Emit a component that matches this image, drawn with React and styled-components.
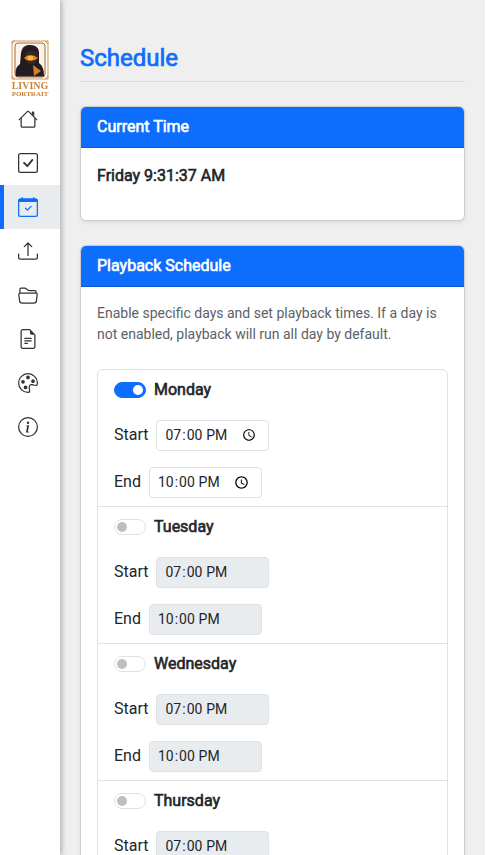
import React, { useState } from "react";
import styled, { createGlobalStyle } from "styled-components";
import {
  BsCheckSquare,
  BsCalendarCheck,
  BsUpload,
  BsFolder2Open,
  BsFileEarmarkText,
  BsPalette,
  BsInfoCircle,
} from "react-icons/bs";

const GlobalStyle = createGlobalStyle`
  *, *::before, *::after { box-sizing: border-box; }
  body {
    margin: 0;
    background: #fff;
    color: #212529;
    font-family: Roboto, "Liberation Sans", sans-serif;
    font-size: 16px;
    line-height: 24px;
  }
`;

const Layout = styled.div`
  display: flex;
  height: 100vh;
`;

const Sidebar = styled.nav`
  display: flex;
  flex-direction: column;
  flex: 0 0 60px;
  padding-top: 39px;
  background: #fff;
  box-shadow: 2px 0 5px rgba(0, 0, 0, 0.25);
  z-index: 1;
`;

const Brand = styled.a`
  display: flex;
  justify-content: center;
  height: 58px;
`;

const NavLink = styled.a`
  display: flex;
  align-items: center;
  height: 44px;
  padding-left: ${(p) => (p.$active ? 14 : 18)}px;
  border-left: ${(p) => (p.$active ? "4px solid #0d6efd" : "0")};
  background: ${(p) => (p.$active ? "#e9ecef" : "transparent")};
  color: ${(p) => (p.$active ? "#0d6efd" : "#333")};
`;

const Main = styled.main`
  flex: 1;
  min-width: 0;
  margin-right: 2px;
  padding: 43px 20px 20px;
  overflow-y: auto;
  scrollbar-width: none;
  background: #efefef;
`;

const Title = styled.h1`
  margin: 0 0 24px;
  padding-bottom: 8px;
  border-bottom: 1px solid #dcdedf;
  color: #0d6efd;
  font-size: 24px;
  font-weight: 400;
  line-height: 30px;
  -webkit-text-stroke: 0.7px currentColor;
`;

const Card = styled.section`
  margin-bottom: 24px;
  border: 1px solid #cbccce;
  border-radius: 6px;
  background: #fff;
  box-shadow: 0 2px 4px rgba(0, 0, 0, 0.075);
`;

const CardHeader = styled.h2`
  margin: 0;
  padding: 8px 16px;
  border-bottom: 1px solid #0b5bd0;
  border-radius: 5px 5px 0 0;
  background: #0d6efd;
  color: #fff;
  font-size: 16px;
  font-weight: 400;
  line-height: 24px;
  -webkit-text-stroke: 0.6px currentColor;
`;

const CardBody = styled.div`
  padding: 16px;
`;

const Clock = styled.p`
  margin: 0 0 16px;
  -webkit-text-stroke: 0.6px currentColor;
`;

const Hint = styled.p`
  margin: 0 0 24px;
  color: #5c6167;
  font-size: 14px;
  line-height: 21px;
`;

const DayList = styled.ul`
  margin: 0;
  padding: 0;
  list-style: none;
  border: 1px solid #dee2e6;
  border-radius: 6px;
`;

const DayItem = styled.li`
  display: flex;
  flex-direction: column;
  align-items: flex-start;
  gap: 16px;
  padding: 8px 16px;
  & + & {
    border-top: 1px solid #dee2e6;
  }
`;

const DayToggle = styled.label`
  display: flex;
  align-items: center;
  gap: 8px;
  margin-bottom: 2px;
  -webkit-text-stroke: 0.6px currentColor;
`;

const Switch = styled.input`
  appearance: none;
  display: flex;
  align-items: center;
  width: 32px;
  height: 16px;
  margin: 0;
  padding: 0 2px;
  border: 1px solid #dee2e6;
  border-radius: 8px;
  background: #fff;
  &::before {
    content: "";
    width: 10px;
    height: 10px;
    border-radius: 50%;
    background: #bfbfbf;
  }
  &:checked {
    justify-content: flex-end;
    border-color: #0d6efd;
    background: #0d6efd;
  }
  &:checked::before {
    background: #fff;
  }
`;

const TimeField = styled.label`
  display: flex;
  align-items: baseline;
  gap: 8px;
`;

const TimeInput = styled.input`
  width: 113px;
  height: 31px;
  margin: 0;
  padding: 4px 9px 4px 7px;
  border: 1px solid #dee2e6;
  border-radius: 4px;
  background: #fff;
  color: #212529;
  font-family: inherit;
  font-size: 14px;
  line-height: 21px;
  &:disabled {
    background: #e9ecef;
  }
`;

const LogoWord = styled.text`
  fill: #c98338;
  font-family: "Liberation Serif", serif;
  font-weight: 700;
  font-size: ${(p) => p.$size}px;
  text-anchor: middle;
`;

function Logo() {
  return (
    <svg width="40" height="58" viewBox="0 0 40 58" role="img" aria-label="Living Portrait">
      <path d="M5 2H35L38 5V37L35 40H5L2 37V5Z" fill="#fffaf3" stroke="#cf9a62" strokeWidth="1" />
      <path d="M2 5V2H5M35 2H38V5M38 37V40H35M5 40H2V37" fill="none" stroke="#c98b4a" />
      <rect x="5" y="4" width="30" height="34" rx="3" fill="#fbf3e8" stroke="#a9683a" strokeWidth="1" />
      <path d="M6 37.500C5 31 6 28 10 25L11 14C12 8 15 6 20 6C26 6 29 9 29 14L29 24C33 27 34 31 34 37.500Z" fill="#231b22" />
      <path d="M15 14C18 11 25 11 28 15L28 20L24 25L19 25L15 21Z" fill="#392725" />
      <path d="M14 19Q20 13 28 19Q20 25 14 19Z" fill="#e68a20" />
      <path d="M18 17H23V21H18Z" fill="#ffb63a" />
      <path d="M23 26L31 32L24 37Z" fill="#d97c30" />
      <LogoWord x="20" y="50" $size={10}>LIVING</LogoWord>
      <LogoWord x="20" y="57" $size={7}>PORTRAIT</LogoWord>
    </svg>
  );
}

function HouseIcon({ size }) {
  return (
    <svg width={size} height={size} viewBox="0 0 16 16" fill="currentColor" aria-hidden="true">
      <path
        fillRule="evenodd"
        d="M2 13.5V7h1v6.500a.5.5 0 0 0 .5.5h9a.5.5 0 0 0 .5-.5V7h1v6.500a1.500 1.500 0 0 1-1.500 1.500h-9A1.500 1.500 0 0 1 2 13.500zm11-11V6l-2-2V2.500a.5.5 0 0 1 .5-.5h1a.5.5 0 0 1 .5.5z"
      />
      <path
        fillRule="evenodd"
        d="M7.293 1.500a1 1 0 0 1 1.414 0l6.647 6.646a.5.5 0 0 1-.708.708L8 2.207 1.354 8.854a.5.5 0 1 1-.708-.708L7.293 1.500z"
      />
    </svg>
  );
}

const NAV = [
  { label: "Home", Icon: HouseIcon },
  { label: "Tasks", Icon: BsCheckSquare },
  { label: "Schedule", Icon: BsCalendarCheck, active: true },
  { label: "Upload", Icon: BsUpload },
  { label: "Files", Icon: BsFolder2Open },
  { label: "Logs", Icon: BsFileEarmarkText },
  { label: "Theme", Icon: BsPalette },
  { label: "About", Icon: BsInfoCircle },
];

const DAYS = ["Monday", "Tuesday", "Wednesday", "Thursday"];

function Day({ name, initial }) {
  const [enabled, setEnabled] = useState(initial);
  return (
    <DayItem>
      <DayToggle>
        <Switch
          type="checkbox"
          role="switch"
          checked={enabled}
          onChange={(e) => setEnabled(e.target.checked)}
        />
        {name}
      </DayToggle>
      <TimeField>
        Start
        <TimeInput type="time" defaultValue="19:00" disabled={!enabled} />
      </TimeField>
      <TimeField>
        End
        <TimeInput type="time" defaultValue="22:00" disabled={!enabled} />
      </TimeField>
    </DayItem>
  );
}

export default function App() {
  return (
    <>
      <GlobalStyle />
      <Layout>
        <Sidebar>
          <Brand href="#home">
            <Logo />
          </Brand>
          {NAV.map(({ label, Icon, active }) => (
            <NavLink
              key={label}
              href={`#${label.toLowerCase()}`}
              aria-label={label}
              aria-current={active ? "page" : undefined}
              $active={active}
            >
              <Icon size={20} />
            </NavLink>
          ))}
        </Sidebar>
        <Main>
          <Title>Schedule</Title>
          <Card>
            <CardHeader>Current Time</CardHeader>
            <CardBody>
              <Clock>Friday 9:31:37 AM</Clock>
            </CardBody>
          </Card>
          <Card>
            <CardHeader>Playback Schedule</CardHeader>
            <CardBody>
              <Hint>
                Enable specific days and set playback times. If a day is not enabled, playback will
                run all day by default.
              </Hint>
              <DayList>
                {DAYS.map((name) => (
                  <Day key={name} name={name} initial={name === "Monday"} />
                ))}
              </DayList>
            </CardBody>
          </Card>
        </Main>
      </Layout>
    </>
  );
}
